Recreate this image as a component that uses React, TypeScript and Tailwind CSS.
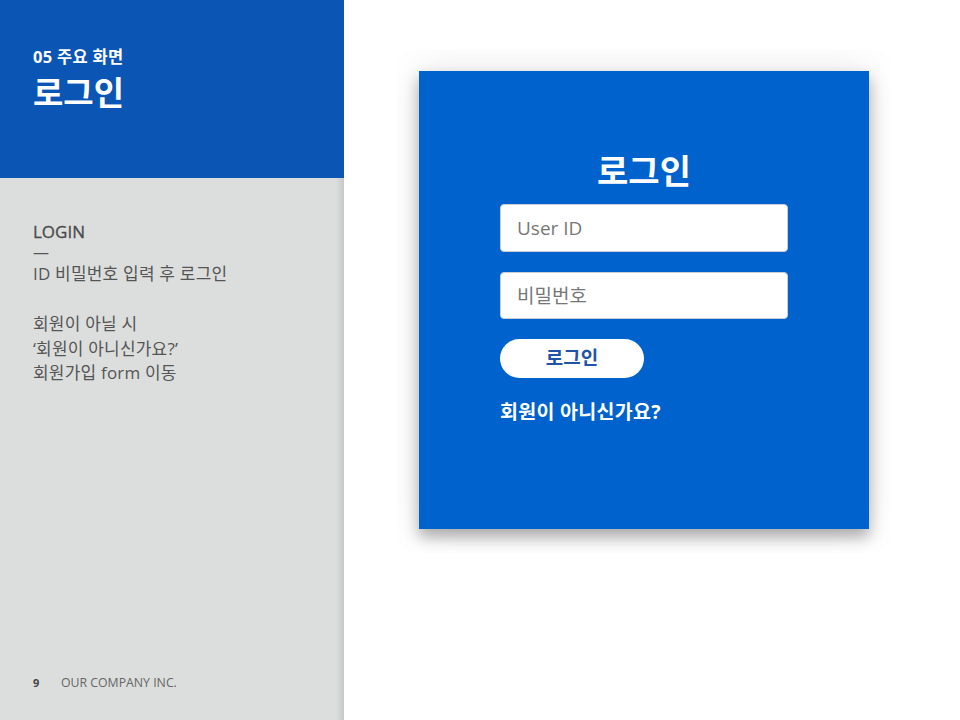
export default function App() {
    const font = { fontFamily: '"Open Sans", "Noto Sans CJK KR", sans-serif' };

    return (
        <div className="flex flex-row w-[960px] h-[720px] bg-white overflow-hidden" style={font}>
            {/* left panel */}
            <div className="w-[344px] h-full flex flex-col shrink-0 relative">
                <div className="h-[178px] bg-[#0b55b5] pl-[33px] pt-[45px] text-white">
                    <div className="text-[16.5px] font-bold leading-[24px] tracking-[0.3px]">05 주요 화면</div>
                    <div className="text-[33px] font-bold leading-[44px] mt-[2px]">로그인</div>
                </div>
                <div className="flex-1 bg-[#dcdedd] pl-[33px] pt-[43px] text-[#555] flex flex-col">
                    <div className="text-[17px] font-medium leading-[21px] text-[#4a4a4a] [-webkit-text-stroke:0.3px_#4a4a4a]">LOGIN</div>
                    <div className="text-[16px] leading-[21px]">—</div>
                    <div className="text-[17px] leading-[21px] tracking-[0.2px]">ID 비밀번호 입력 후 로그인</div>
                    <div className="mt-[28px] text-[17px] leading-[24.5px] tracking-[0.2px]">
                        <div>회원이 아닐 시</div>
                        <div>‘회원이 아니신가요?’</div>
                        <div>회원가입 form 이동</div>
                    </div>
                    <div className="mt-auto mb-[28px] flex flex-row items-center text-[12.3px]">
                        <span className="font-bold text-[11px] text-[#444] w-[28px]">9</span>
                        <span className="text-[#666]">OUR COMPANY INC.</span>
                    </div>
                </div>
                <div className="absolute top-[178px] right-0 w-[8px] bottom-0 bg-gradient-to-r from-transparent to-black/10"></div>
            </div>

            {/* right side */}
            <div className="flex-1 pl-[53px] pt-[49px]">
                <div className="w-[493px] h-[504px] overflow-hidden p-[22px]">
                    <div className="w-[450px] h-[458px] bg-[#0062cc] shadow-[0_8px_14px_rgba(0,0,0,0.3),0_0_36px_rgba(0,0,0,0.1)] flex flex-col items-center pt-[77px]">
                        <div className="text-white text-[34px] font-bold leading-[46px]">로그인</div>
                        <div className="w-[288px] flex flex-col mt-[10px]">
                            <input
                                placeholder="User ID"
                                className="h-[48px] bg-white rounded-[4px] border border-[#c9ced6] px-[16px] text-[19px] placeholder:text-[#777] outline-none"
                            />
                            <input
                                placeholder="비밀번호"
                                type="password"
                                className="h-[47px] mt-[20px] bg-white rounded-[4px] border border-[#c9ced6] px-[16px] text-[19px] placeholder:text-[#777] outline-none"
                            />
                            <button className="mt-[20px] w-[144px] h-[39px] bg-white rounded-full text-[#1f54a6] text-[19px] font-bold">
                                로그인
                            </button>
                            <div className="mt-[19px] text-white text-[19.5px] font-bold leading-[30px] tracking-[0.3px]">회원이 아니신가요?</div>
                        </div>
                    </div>
                </div>
            </div>
        </div>
    );
}
